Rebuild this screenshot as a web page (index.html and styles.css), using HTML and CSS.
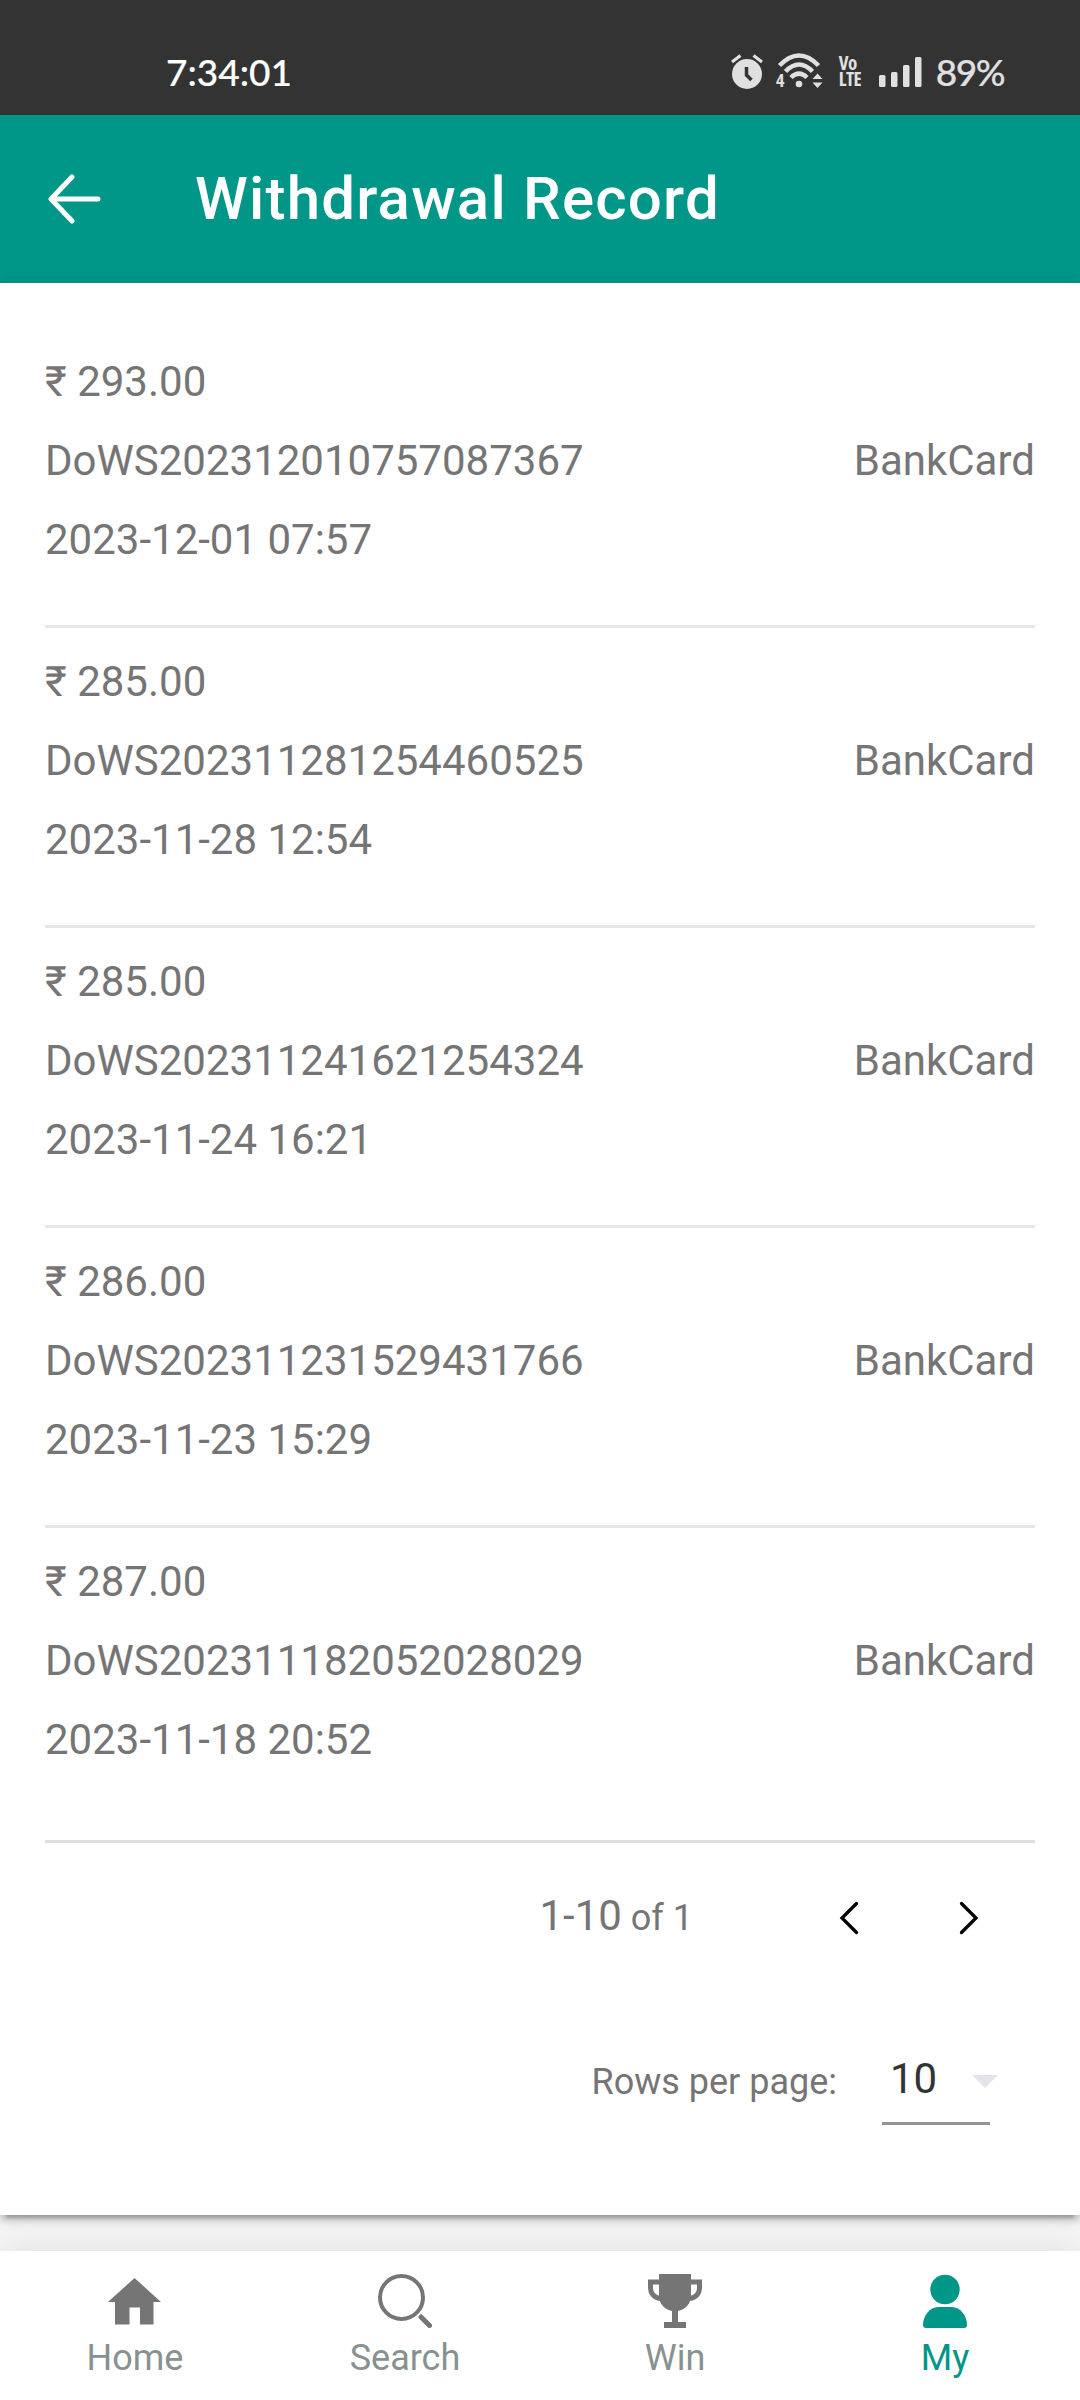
FILE: index.html
```html
<!DOCTYPE html>
<html lang="en">
<head>
    <meta charset="UTF-8">
    <meta name="viewport" content="width=device-width, initial-scale=1.0">
    <title>Withdrawal Record</title>
    <link rel="stylesheet" href="styles.css">
</head>
<body>
    <div class="status-bar">
        <span class="time">7:34:01</span>
        <div class="status-icons">
            <svg class="alarm" width="32" height="36" viewBox="0 0 32 36">
                <path d="M1 8L9.500 1.500M31 8L22.500 1.500" stroke="#e0e0e0" stroke-width="3.200"/>
                <circle cx="16" cy="20" r="15" fill="#e0e0e0"/>
                <path d="M15.500 13v8l5 5" fill="none" stroke="#333" stroke-width="3.500"/>
            </svg>
            <svg class="wifi" width="48" height="42" viewBox="0 0 48 42">
                <g fill="none" stroke="#e0e0e0" stroke-width="4.500">
                    <path d="M3.500 12.500Q23 -7.500 42.500 12.500"/>
                    <path d="M9.500 18.500Q23 4.500 36.500 18.500"/>
                    <path d="M15 24.500Q23 16.500 31 24.500"/>
                </g>
                <circle cx="23" cy="31" r="3.300" fill="#e0e0e0"/>
                <path d="M41.500 20.500l5 5.500h-10zM41.500 35l5-5.500h-10z" fill="#e0e0e0"/>
                <text x="0" y="34" class="wifi-band">4</text>
            </svg>
            <div class="volte"><span>Vo</span><span>LTE</span></div>
            <svg class="signal" width="43" height="30" viewBox="0 0 43 30" fill="#e0e0e0">
                <rect x="0" y="18" width="6.500" height="12" rx="1.500"/>
                <rect x="12" y="15" width="6.500" height="15" rx="1.500"/>
                <rect x="24" y="8" width="6.500" height="22" rx="1.500"/>
                <rect x="36" y="0" width="6.500" height="30" rx="1.500"/>
            </svg>
            <span class="battery">89%</span>
        </div>
    </div>

    <div class="header">
        <svg class="back" width="54" height="50" viewBox="0 0 54 50">
            <path d="M25 3L4 25l21 22M4 25h47" fill="none" stroke="#fff" stroke-width="5" stroke-linecap="round" stroke-linejoin="round"/>
        </svg>
        <h1>Withdrawal Record</h1>
    </div>

    <div class="card">
        <div class="record">
            <p>₹ 293.00</p>
            <p class="order"><span>DoWS202312010757087367</span><span>BankCard</span></p>
            <p>2023-12-01 07:57</p>
        </div>
        <div class="record">
            <p>₹ 285.00</p>
            <p class="order"><span>DoWS202311281254460525</span><span>BankCard</span></p>
            <p>2023-11-28 12:54</p>
        </div>
        <div class="record">
            <p>₹ 285.00</p>
            <p class="order"><span>DoWS202311241621254324</span><span>BankCard</span></p>
            <p>2023-11-24 16:21</p>
        </div>
        <div class="record">
            <p>₹ 286.00</p>
            <p class="order"><span>DoWS202311231529431766</span><span>BankCard</span></p>
            <p>2023-11-23 15:29</p>
        </div>
        <div class="record">
            <p>₹ 287.00</p>
            <p class="order"><span>DoWS202311182052028029</span><span>BankCard</span></p>
            <p>2023-11-18 20:52</p>
        </div>

        <div class="pagination">
            <div class="range"><span class="range-rows">1-10</span> of 1</div>
            <svg class="prev" width="20" height="34" viewBox="0 0 20 34">
                <path d="M17.500 2.500L3 17l14.500 14.500" fill="none" stroke="#000" stroke-width="3.300" stroke-linecap="round"/>
            </svg>
            <svg class="next" width="20" height="34" viewBox="0 0 20 34">
                <path d="M2.500 2.500L17 17L2.500 31.500" fill="none" stroke="#000" stroke-width="3.300" stroke-linecap="round"/>
            </svg>
        </div>
        <div class="rows">
            <span class="rows-label">Rows per page:</span>
            <div class="select">
                <span>10</span>
                <svg class="caret" width="26" height="13" viewBox="0 0 26 13">
                    <path d="M0 0h26L13 13z" fill="#e3e5e8"/>
                </svg>
            </div>
        </div>
    </div>

    <div class="nav">
        <div class="nav-item">
            <svg width="54" height="54" viewBox="0 0 54 54">
                <path d="M26.500 4L53 28H45.500v22.500H32V33.500H21.500v17H7V28H0z" fill="#757575"/>
            </svg>
            <span>Home</span>
        </div>
        <div class="nav-item">
            <svg width="54" height="54" viewBox="0 0 54 54" fill="none" stroke="#757575">
                <circle cx="23.500" cy="23.500" r="21.500" stroke-width="4"/>
                <path d="M43 43l8.500 8.500" stroke-width="5" stroke-linecap="round"/>
            </svg>
            <span>Search</span>
        </div>
        <div class="nav-item">
            <svg width="54" height="54" viewBox="0 0 54 54">
                <path d="M11 0h32v23c0 6-6 13-13 14v11h8v6H16v-6h8V37c-7-1-13-8-13-14z" fill="#757575"/>
                <path d="M12 8H2.500v6C2.500 19 6 24 12 24.500M42 8h9.500v6c0 5-3.500 10-9.500 10.500" fill="none" stroke="#757575" stroke-width="5"/>
            </svg>
            <span>Win</span>
        </div>
        <div class="nav-item active">
            <svg width="54" height="54" viewBox="0 0 54 54" fill="#009688">
                <circle cx="27" cy="15.500" r="14.700"/>
                <path d="M20.500 33h13c9 0 15.500 9 15.500 18q0 3-3 3H8q-3 0-3-3C5 42 11.500 33 20.500 33z"/>
            </svg>
            <span>My</span>
        </div>
    </div>
</body>
</html>
```
FILE: styles.css
```css
* {
    box-sizing: border-box;
}
body {
    font-family: Roboto, sans-serif;
    background: #f5f5f5;
    color: #757575;
    margin: 0;
    height: 2400px;
    display: flex;
    flex-direction: column;
    overflow: hidden;
}
svg {
    display: block;
    flex: none;
}
.status-bar {
    height: 115px;
    background: #333;
    display: flex;
    justify-content: space-between;
    padding: 49px 76px 0 166px;
    font-family: Lato, sans-serif;
    font-weight: 500;
    font-size: 37px;
    line-height: 46px;
}
.time {
    color: #fff;
    -webkit-text-stroke: 0.2px #fff;
}
.status-icons {
    display: flex;
    align-items: flex-start;
    color: #e0e0e0;
}
.alarm {
    margin: 5px 13px 0 0;
}
.wifi {
    margin: 4px 15px 0 0;
}
.wifi-band {
    font-family: "Open Sans", sans-serif;
    font-stretch: 75%;
    font-size: 18px;
    font-weight: bold;
    fill: #e0e0e0;
}
.volte {
    display: flex;
    flex-direction: column;
    width: 24px;
    margin: 6px 16px 0 0;
    font-family: "Open Sans", sans-serif;
    font-stretch: 75%;
    font-size: 19px;
    font-weight: bold;
    letter-spacing: -0.5px;
    line-height: 16px;
}
.signal {
    margin: 8px 14px 0 0;
}
.battery {
    letter-spacing: -1.5px;
    -webkit-text-stroke: 0.2px #e0e0e0;
}
.header {
    height: 168px;
    background: #009688;
    display: flex;
    align-items: center;
    padding-left: 47px;
    gap: 94px;
}
.header h1 {
    margin: 0;
    color: #fff;
    font-size: 60px;
    font-weight: 500;
    letter-spacing: 1.2px;
    line-height: 72px;
}
.card {
    height: 1932px;
    background: #fff;
    padding: 45px 45px 0;
    font-size: 42px;
    box-shadow: 0 9px 3px -6px rgba(0, 0, 0, 0.2), 0 6px 6px 0 rgba(0, 0, 0, 0.14), 0 3px 15px 0 rgba(0, 0, 0, 0.12);
}
.record {
    height: 300px;
    padding-top: 14px;
    border-bottom: 3px solid #e7e7e7;
}
.record:nth-child(5) {
    height: 315px;
    border-bottom-color: #e0e0e0;
}
.record p {
    margin: 0;
    line-height: 79px;
}
.order {
    display: flex;
    justify-content: space-between;
}
.pagination {
    height: 150px;
    display: flex;
    justify-content: flex-end;
    align-items: center;
    padding-right: 56px;
}
.range {
    font-size: 36px;
    margin-right: 146px;
    padding-bottom: 5px;
}
.range-rows {
    font-size: 42px;
}
.prev {
    margin-right: 100px;
}
.rows {
    display: flex;
    justify-content: flex-end;
    align-items: flex-start;
    padding: 48px 45px 0 0;
}
.rows-label {
    font-size: 36px;
    line-height: 82px;
    margin-right: 45px;
}
.select {
    width: 108px;
    height: 84px;
    display: flex;
    align-items: center;
    padding-left: 8px;
    border-bottom: 3px solid #949494;
    color: #333;
}
.select span {
    padding-bottom: 6px;
}
.caret {
    margin-left: 35px;
}
.nav {
    flex: none;
    height: 149px;
    margin-top: 36px;
    background: #fff;
    display: grid;
    grid-template-columns: repeat(4, 1fr);
    box-shadow: 0 0 36px rgba(0, 0, 0, 0.09);
}
/* keeps the nav shadow off the card */
.card,
.header {
    position: relative;
    z-index: 1;
}
.nav-item {
    display: flex;
    flex-direction: column;
    align-items: center;
    padding-top: 23px;
    color: #879290;
    font-size: 36px;
    line-height: 42px;
    gap: 9px;
}
.nav-item.active {
    color: #009688;
}
```
